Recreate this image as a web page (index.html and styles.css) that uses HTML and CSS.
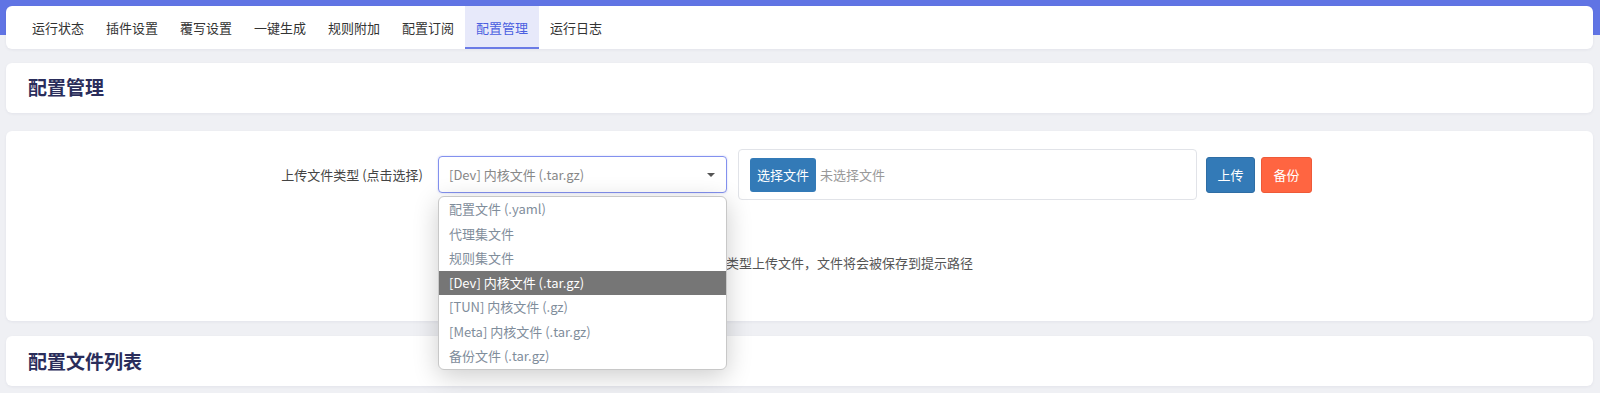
FILE: index.html
```html
<!DOCTYPE html>
<html lang="zh-CN">
<head>
<meta charset="utf-8">
<title>配置管理</title>
<link rel="stylesheet" href="styles.css">
</head>
<body>
<div class="page">
  <nav class="card tabs">
    <a class="tab">运行状态</a>
    <a class="tab">插件设置</a>
    <a class="tab">覆写设置</a>
    <a class="tab">一键生成</a>
    <a class="tab">规则附加</a>
    <a class="tab">配置订阅</a>
    <a class="tab active">配置管理</a>
    <a class="tab">运行日志</a>
  </nav>

  <section class="card head-card">
    <h2 class="card-title">配置管理</h2>
  </section>

  <section class="card upload-card">
    <div class="upload-row">
      <label class="upload-label">上传文件类型 (点击选择)</label>
      <div class="select-wrap">
        <div class="select-box">
          <span class="select-value">[Dev] 内核文件 (.tar.gz)</span>
          <span class="caret"></span>
        </div>
        <ul class="dropdown">
          <li class="option">配置文件 (.yaml)</li>
          <li class="option">代理集文件</li>
          <li class="option">规则集文件</li>
          <li class="option selected">[Dev] 内核文件 (.tar.gz)</li>
          <li class="option">[TUN] 内核文件 (.gz)</li>
          <li class="option">[Meta] 内核文件 (.tar.gz)</li>
          <li class="option">备份文件 (.tar.gz)</li>
        </ul>
      </div>
      <div class="file-box">
        <span class="file-btn">选择文件</span>
        <span class="file-name">未选择文件</span>
      </div>
      <button class="btn btn-upload">上传</button>
      <button class="btn btn-backup">备份</button>
    </div>
    <p class="hint">请选择对应的文件类型上传文件，文件将会被保存到提示路径</p>
  </section>

  <section class="card head-card last">
    <h2 class="card-title">配置文件列表</h2>
  </section>
</div>
</body>
</html>
```

FILE: styles.css
```css
* { box-sizing: border-box; }

html, body {
  margin: 0;
  padding: 0;
}

body {
  font-family: "Noto Sans CJK SC", "Noto Sans", sans-serif;
  font-size: 13px;
  color: #333;
  background: #eff0f4;
}

.page {
  min-height: 393px;
  padding: 6px 7px 0 6px;
  background: linear-gradient(#6074e4 0, #6074e4 35px, #eff0f4 35px);
  display: flex;
  flex-direction: column;
}

.card {
  background: #fff;
  border-radius: 6px;
  box-shadow: 0 1px 3px rgba(30, 40, 80, 0.06);
}

/* tabs */
.tabs {
  height: 43px;
  display: flex;
  padding-left: 15px;
}

.tab {
  display: flex;
  align-items: center;
  padding: 1px 11px 0;
  color: #333;
  font-size: 13px;
  border-bottom: 2px solid transparent;
}

.tab.active {
  background: #e7e9fa;
  color: #4b5fe0;
  border-bottom-color: #6b7be6;
}

/* title cards */
.head-card {
  margin-top: 14px;
  height: 50px;
  display: flex;
  align-items: center;
  padding: 0 0 3px 22px;
}

.head-card.last {
  margin-top: 15px;
  padding-bottom: 1px;
}

.card-title {
  margin: 0;
  font-size: 19px;
  font-weight: 700;
  color: #2a2d5b;
}

/* upload card */
.upload-card {
  margin-top: 18px;
  height: 190px;
  padding-top: 18px;
}

.upload-row {
  display: flex;
  align-items: center;
}

.upload-label {
  width: 417px;
  text-align: right;
  color: #444;
  font-size: 13px;
  margin-right: 15px;
}

.select-wrap {
  position: relative;
  width: 289px;
  margin-right: 11px;
}

.select-box {
  height: 37px;
  border: 1px solid #8391ee;
  border-radius: 4px;
  display: flex;
  align-items: center;
  justify-content: space-between;
  padding: 0 11px 0 10px;
  box-shadow: 0 0 2px rgba(96, 116, 228, 0.35);
}

.select-value {
  color: #888;
}

.caret {
  width: 0;
  height: 0;
  border-left: 4px solid transparent;
  border-right: 4px solid transparent;
  border-top: 4px solid #555;
}

.dropdown {
  position: absolute;
  left: 0;
  top: 40px;
  width: 289px;
  margin: 0;
  padding: 0;
  list-style: none;
  background: #fff;
  border: 1px solid #c8c8c8;
  border-radius: 6px;
  box-shadow: 0 6px 26px rgba(0, 0, 0, 0.2);
  overflow: hidden;
  z-index: 5;
}

.option {
  height: 24.5px;
  line-height: 24.5px;
  padding-left: 10px;
  color: #7f8d9b;
  font-size: 13px;
}

.option.selected {
  background: #767676;
  color: #fff;
}

.file-box {
  width: 459px;
  height: 51px;
  border: 1px solid #e1e3e8;
  border-radius: 4px;
  display: flex;
  align-items: center;
  padding-left: 11px;
  margin-right: 9px;
}

.file-btn {
  background: #337ab7;
  color: #fff;
  height: 34px;
  line-height: 34px;
  padding: 0 7px;
  border-radius: 3px;
  font-size: 13px;
}

.file-name {
  color: #999;
  margin-left: 4px;
}

.btn {
  font-family: inherit;
  font-size: 13px;
  height: 36px;
  color: #fff;
  border-radius: 3px;
  padding: 0;
  cursor: pointer;
}

.btn-upload {
  width: 49px;
  background: #337ab7;
  border: 1px solid #2e6da4;
  margin-right: 6px;
}

.btn-backup {
  width: 51px;
  background: #ff6541;
  border: 1px solid #ee5a38;
}

.hint {
  margin: 53px 0 0;
  padding-right: 4px;
  text-align: center;
  color: #555;
  font-size: 13px;
}
```
